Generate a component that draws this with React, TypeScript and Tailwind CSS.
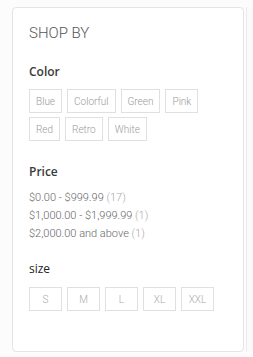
import React from "react";

const colors = ["Blue", "Colorful", "Green", "Pink", "Red", "Retro", "White"];
const sizes = ["S", "M", "L", "XL", "XXL"];
const prices: [string, string][] = [
  ["$0.00 - $999.99", "(17)"],
  ["$1,000.00 - $1,999.99", "(1)"],
  ["$2,000.00 and above", "(1)"],
];

export default function App() {
  return (
    <div className="w-[253px] h-[357px] bg-[#fcfcfc] flex overflow-hidden" style={{ fontFamily: "Roboto, 'Liberation Sans', sans-serif" }}>
      <div className="ml-[12px] mt-[7px] w-[232px] h-[345px] shrink-0 border border-[#e4e4e4] rounded-[4px] bg-white pl-[16px]">
        <div className="pt-[15px] text-[15px] leading-[20px] font-light text-[#555]">SHOP BY</div>

        <div className="mt-[21px] text-[12px] leading-[16px] font-semibold text-[#3a3a3a]" style={{ fontFamily: "'Open Sans', sans-serif" }}>Color</div>
        <div className="mt-[9px] flex flex-wrap gap-x-[5px] gap-y-[4px] w-[190px]">
          {colors.map((c) => (
            <div key={c} className="h-[24px] px-[6px] border border-[#e0e0e0] flex items-center justify-center text-[10px] font-light text-[#999]">
              {c}
            </div>
          ))}
        </div>

        <div className="mt-[23px] text-[12px] leading-[16px] font-semibold text-[#3a3a3a]" style={{ fontFamily: "'Open Sans', sans-serif" }}>Price</div>
        <div className="mt-[9px] flex flex-col">
          {prices.map(([p, n]) => (
            <div key={p} className="text-[11px] leading-[18px] font-light text-[#666]">
              {p} <span className="text-[#aaa]">{n}</span>
            </div>
          ))}
        </div>

        <div className="mt-[18px] text-[12px] leading-[16px] font-normal text-[#222]" style={{ fontFamily: "'Open Sans', sans-serif" }}>size</div>
        <div className="mt-[10px] flex gap-[5px]">
          {sizes.map((s) => (
            <div key={s} className="w-[33px] h-[24px] border border-[#e0e0e0] flex items-center justify-center text-[10px] font-light text-[#aaa]">
              {s}
            </div>
          ))}
        </div>
      </div>
      <div className="ml-[2px] mt-[7px] h-[345px] w-[7px] border-l border-[#ececec] bg-[#fafafa]" />
    </div>
  );
}
